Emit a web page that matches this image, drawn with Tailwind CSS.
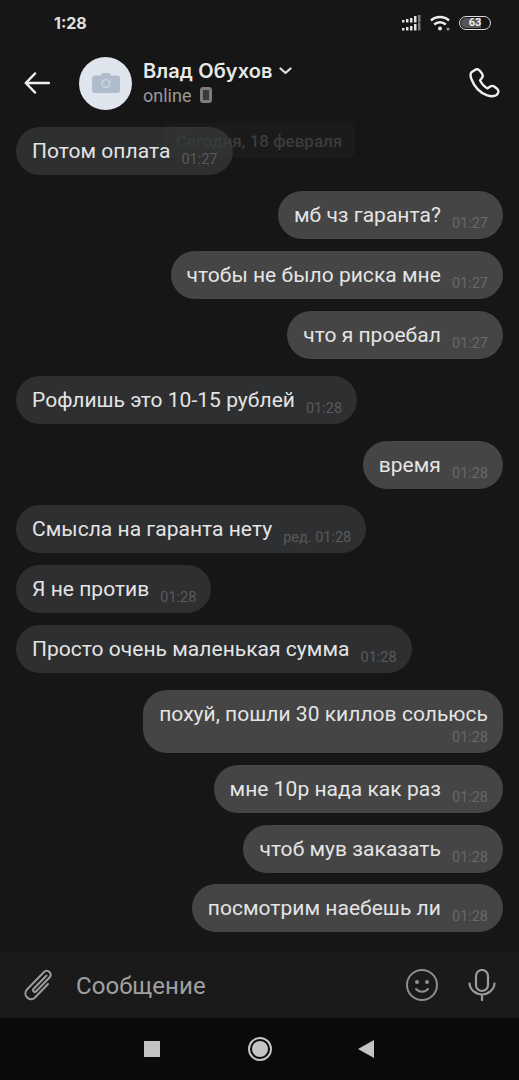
<!DOCTYPE html>
<html>
<head>
  <meta charset="UTF-8">
  <title>Чат</title>
  <script src="https://cdn.jsdelivr.net/npm/@tailwindcss/browser@4"></script>
</head>
<body class="w-[519px] h-[1080px] overflow-hidden bg-[#161616] font-['Roboto',sans-serif] text-[#e4e4e4] flex flex-col">
  <!-- status bar -->
  <div class="h-[46px] flex items-center justify-between pl-[54px] pr-[28px] shrink-0">
    <span class="text-[16px] font-bold text-[#e0e0e0] font-['Inter',sans-serif]">1:28</span>
    <div class="flex items-center gap-[8px]">
      <svg width="20" height="16" viewBox="0 0 20 16" fill="#e0e0e0">
        <rect x="0" y="5" width="2.500" height="2.500"/><rect x="4" y="4" width="2.500" height="3.500"/><rect x="8" y="3" width="2.500" height="4.500"/><rect x="12" y="1" width="2.500" height="6.500"/><rect x="16" y="0" width="2.500" height="7.500" fill="#777"/>
        <rect x="0" y="13" width="2.500" height="2.500"/><rect x="4" y="12" width="2.500" height="3.500"/><rect x="8" y="11" width="2.500" height="4.500"/><rect x="12" y="9" width="2.500" height="6.500"/><rect x="16" y="8" width="2.500" height="7.500" fill="#777"/>
      </svg>
      <svg width="21" height="16" viewBox="0 0 21 16" fill="none" stroke="#ececec" stroke-width="2.400">
        <path d="M1 5.500c5-4.600 13-4.600 18 0"/><path d="M4.200 9.500c3.300-3 8.300-3 11.600 0"/><circle cx="10" cy="13.500" r="2" fill="#ececec" stroke="none"/><circle cx="18" cy="14" r="1.500" fill="#999" stroke="none"/>
      </svg>
      <div class="relative w-[32px] h-[14px] rounded-full border border-[#ddd] p-px flex">
        <div class="w-[20px] bg-[#555] rounded-l-full"></div>
        <span class="absolute inset-0 text-center text-[11px] leading-[12px] font-bold text-[#eee]">63</span>
      </div>
    </div>
  </div>

  <!-- header -->
  <div class="h-[74px] flex items-center shrink-0 relative">
    <svg class="ml-[24px]" width="26" height="24" viewBox="0 0 26 24" fill="none" stroke="#f0f0f0" stroke-width="2.500" stroke-linecap="round" stroke-linejoin="round"><path d="M25 12H2M11 2.500 1.800 12 11 21.500"/></svg>
    <div class="ml-[29px] w-[53px] h-[53px] rounded-full bg-[#dfe5ec] flex items-center justify-center">
      <svg width="28" height="20" viewBox="0 0 28 20"><path fill="#aebccb" d="M3 2.500h6L10.500 0h7L19 2.500h6a3 3 0 0 1 3 3V17a3 3 0 0 1-3 3H3a3 3 0 0 1-3-3V5.500a3 3 0 0 1 3-3z"/><circle cx="14" cy="10.500" r="4.500" fill="#cfd8e2"/><circle cx="14" cy="10.500" r="3.200" fill="#aebccb"/></svg>
    </div>
    <div class="ml-[11px] flex flex-col">
      <div class="flex items-center gap-[6px] leading-[24px]">
        <span class="text-[20px] font-semibold text-[#e8e8e8] font-['Inter',sans-serif] tracking-[0.1px]">Влад Обухов</span>
        <svg width="13" height="8" viewBox="0 0 13 8" fill="none" stroke="#e0e0e0" stroke-width="2.200" stroke-linecap="round" stroke-linejoin="round"><path d="M1.500 1.500 6.500 6l5-4.500"/></svg>
      </div>
      <div class="flex items-center gap-[9px] leading-[25px]">
        <span class="text-[18px] text-[#9a9a9a]">online</span>
        <div class="w-[12px] h-[16px] rounded-[3px] border-[3px] border-[#7c7c7c] bg-[#3a3a3a]"></div>
      </div>
    </div>
    <svg class="ml-auto mr-[18px]" width="32" height="32" viewBox="0 0 32 32" fill="none" stroke="#efefef" stroke-width="2.400" stroke-linejoin="round"><path d="M5.500 3.200 2.800 5c-1.500 1-1.500 3.800-.4 7 2.800 7.500 9 14 15.800 16.400 3 1 6.500 1.500 9.300-.4 2.200-1.600 2.600-4.500.6-6.300l-2.600-2c-1.600-1.200-3.200-1-4.700.1l-2.200 1.600c-2.700-1.400-6.300-5.200-7.500-8l1.800-2.400c1-1.400 1.100-3 .1-4.400L10.600 3.600C9.300 1.900 7.200 2 5.500 3.200z"/></svg>
  </div>

  <!-- messages -->
  <div class="relative flex-1 flex flex-col pt-[7px] px-[16px] text-[21px] leading-[26px] tracking-[0.03px]">
    <div class="absolute left-[163px] top-[3px] w-[192px] h-[35px] rounded-[6px] bg-[#1b1b1b] flex items-center justify-center text-[17px] tracking-normal text-[#3c3c3c] font-medium">Сегодня, 18 февраля</div>

    <div class="relative self-start h-[48px] rounded-[24px] bg-[#383a3c]/70 flex pl-[16px] pr-[15px] pt-[11px]"><span>Потом оплата</span><span class="ml-[11px] mt-[13px] text-[14.5px] leading-[18px] tracking-normal text-[#5a5a5a]">01:27</span></div>
    <div class="mt-[16px] self-end h-[48px] rounded-[24px] bg-[#454545] flex pl-[16px] pr-[15px] pt-[11px]"><span>мб чз гаранта?</span><span class="ml-[11px] mt-[13px] text-[14.5px] leading-[18px] tracking-normal text-[#686868]">01:27</span></div>
    <div class="mt-[12px] self-end h-[48px] rounded-[24px] bg-[#454545] flex pl-[16px] pr-[15px] pt-[11px]"><span>чтобы не было риска мне</span><span class="ml-[11px] mt-[13px] text-[14.5px] leading-[18px] tracking-normal text-[#686868]">01:27</span></div>
    <div class="mt-[12px] self-end h-[48px] rounded-[24px] bg-[#454545] flex pl-[16px] pr-[15px] pt-[11px]"><span>что я проебал</span><span class="ml-[11px] mt-[13px] text-[14.5px] leading-[18px] tracking-normal text-[#686868]">01:27</span></div>
    <div class="mt-[17px] self-start h-[48px] rounded-[24px] bg-[#2e2f31] flex pl-[16px] pr-[15px] pt-[11px]"><span>Рофлишь это 10-15 рублей</span><span class="ml-[11px] mt-[13px] text-[14.5px] leading-[18px] tracking-normal text-[#5a5a5a]">01:28</span></div>
    <div class="mt-[17px] self-end h-[48px] rounded-[24px] bg-[#454545] flex pl-[16px] pr-[15px] pt-[11px]"><span>время</span><span class="ml-[11px] mt-[13px] text-[14.5px] leading-[18px] tracking-normal text-[#686868]">01:28</span></div>
    <div class="mt-[16px] self-start h-[48px] rounded-[24px] bg-[#2e2f31] flex pl-[16px] pr-[15px] pt-[11px]"><span>Смысла на гаранта нету</span><span class="ml-[11px] mt-[13px] text-[14.5px] leading-[18px] tracking-normal text-[#5a5a5a]">ред. 01:28</span></div>
    <div class="mt-[12px] self-start h-[48px] rounded-[24px] bg-[#2e2f31] flex pl-[16px] pr-[15px] pt-[11px]"><span>Я не против</span><span class="ml-[11px] mt-[13px] text-[14.5px] leading-[18px] tracking-normal text-[#5a5a5a]">01:28</span></div>
    <div class="mt-[12px] self-start h-[48px] rounded-[24px] bg-[#2e2f31] flex pl-[16px] pr-[15px] pt-[11px]"><span>Просто очень маленькая сумма</span><span class="ml-[11px] mt-[13px] text-[14.5px] leading-[18px] tracking-normal text-[#5a5a5a]">01:28</span></div>
    <div class="mt-[17px] self-end h-[63px] rounded-[24px] bg-[#454545] flex flex-col pl-[16px] pr-[15px] pt-[11px]"><span>похуй, пошли 30 киллов сольюсь</span><span class="self-end mt-[2px] text-[14.5px] leading-[18px] tracking-normal text-[#686868]">01:28</span></div>
    <div class="mt-[12px] self-end h-[48px] rounded-[24px] bg-[#454545] flex pl-[16px] pr-[15px] pt-[11px]"><span>мне 10р нада как раз</span><span class="ml-[11px] mt-[13px] text-[14.5px] leading-[18px] tracking-normal text-[#686868]">01:28</span></div>
    <div class="mt-[12px] self-end h-[48px] rounded-[24px] bg-[#454545] flex pl-[16px] pr-[15px] pt-[11px]"><span>чтоб мув заказать</span><span class="ml-[11px] mt-[13px] text-[14.5px] leading-[18px] tracking-normal text-[#686868]">01:28</span></div>
    <div class="mt-[11px] self-end h-[48px] rounded-[24px] bg-[#454545] flex pl-[16px] pr-[15px] pt-[11px]"><span>посмотрим наебешь ли</span><span class="ml-[11px] mt-[13px] text-[14.5px] leading-[18px] tracking-normal text-[#686868]">01:28</span></div>
  </div>

  <!-- input -->
  <div class="h-[66px] shrink-0 bg-[#1a1a1a] flex items-center">
    <svg class="ml-[22px]" width="32" height="34" viewBox="0 0 32 34" fill="none" stroke="#9c9c9c" stroke-width="2" stroke-linecap="round"><path d="M24.500 7.500 11.500 21c-1.500 1.700 1 4 2.700 2.300L27.500 9.500c3.300-3.500-1.700-9.300-5.700-5.300L5 21.500c-5 5.300 2.800 13.500 8 8L26 16"/></svg>
    <span class="ml-[22px] pt-[2px] text-[24px] tracking-[0.05px] text-[#a0a0a0]">Сообщение</span>
    <svg class="ml-auto" width="32" height="32" viewBox="0 0 32 32" fill="none" stroke="#8e8e8e" stroke-width="2"><circle cx="16" cy="16" r="15"/><circle cx="11" cy="13" r="2" fill="#8e8e8e" stroke="none"/><circle cx="21" cy="13" r="2" fill="#8e8e8e" stroke="none"/><path d="M10 20c3 3.500 9 3.500 12 0" stroke-linecap="round"/></svg>
    <svg class="ml-[30px] mr-[23px]" width="28" height="32" viewBox="0 0 28 32" fill="none" stroke="#9c9c9c" stroke-width="2.200" stroke-linecap="round"><rect x="8" y="1" width="12" height="21" rx="6"/><path d="M1.500 14.500C2 21 8 25.500 14 25.500S26 21 26.500 14.500M14 25.500V31"/></svg>
  </div>

  <!-- nav -->
  <div class="h-[62px] shrink-0 bg-[#0a0a0a] flex items-center pb-[1px]">
    <div class="ml-[144px] w-[16px] h-[16px] bg-[#c4c4c4]"></div>
    <div class="ml-[88px] w-[24px] h-[24px] rounded-full border-2 border-[#c4c4c4] p-[2px]"><div class="w-full h-full rounded-full bg-[#c4c4c4]"></div></div>
    <svg class="ml-[86px]" width="16" height="18" viewBox="0 0 16 18"><path fill="#c4c4c4" d="M16 0v18L0 9z"/></svg>
  </div>
</body>
</html>
